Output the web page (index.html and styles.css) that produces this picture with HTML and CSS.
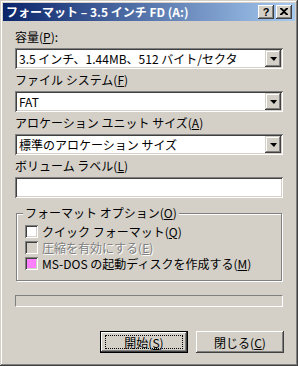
FILE: index.html
```html
<html>
    <head>
        <title>フォーマット</title>
        <link rel="stylesheet" href="styles.css">
    </head>
    <body>
        <div class="window">
            <div class="titlebar">
                <span class="title">フォーマット – 3.5 インチ FD (A:)</span>
                <div class="tbtns">
                    <span class="tbtn">?</span>
                    <span class="tbtn close">
                        <svg width="8" height="7" viewBox="0 0 8 7"><path d="M0 0h2l2 2 2-2h2v1L5 3.5 8 6v1H6L4 5 2 7H0V6l3-2.5L0 1z" fill="#000"/></svg>
                    </span>
                </div>
            </div>
            <div class="content">
                <div class="label">容量(<u>P</u>):</div>
                <div class="combo"><span class="value">3.5 インチ、1.44MB、512 バイト/セクタ</span><span class="arrow"></span></div>

                <div class="label">ファイル システム(<u>F</u>)</div>
                <div class="combo"><span class="value">FAT</span><span class="arrow"></span></div>

                <div class="label">アロケーション ユニット サイズ(<u>A</u>)</div>
                <div class="combo"><span class="value">標準のアロケーション サイズ</span><span class="arrow"></span></div>

                <div class="label">ボリューム ラベル(<u>L</u>)</div>
                <div class="textbox"></div>

                <fieldset class="group">
                    <legend>フォーマット オプション(<u>O</u>)</legend>
                    <div class="check"><span class="box"></span><span>クイック フォーマット(<u>Q</u>)</span></div>
                    <div class="check disabled"><span class="box"></span><span>圧縮を有効にする(<u>E</u>)</span></div>
                    <div class="check"><span class="box pink"></span><span>MS-DOS の起動ディスクを作成する(<u>M</u>)</span></div>
                </fieldset>

                <div class="progress"></div>

                <div class="buttons">
                    <div class="btn default"><span class="focus">開始(<u>S</u>)</span></div>
                    <div class="btn">閉じる(<u>C</u>)</div>
                </div>
            </div>
        </div>
    </body>
</html>
```

FILE: styles.css
```css
html, body{
	margin:0;
	padding:0;
	background:#d4d0c8;
	}
.window{
	width:298px;
	height:366px;
	box-sizing:border-box;
	padding:3px;
	background:#d4d0c8;
	box-shadow:inset -1px -1px #404040, inset 1px 1px #d4d0c8, inset -2px -2px #808080, inset 2px 2px #fff;
	font-family:'Noto Sans CJK JP', sans-serif;
	font-size:12px;
	color:#000;
	}
.titlebar{
	height:18px;
	display:flex;
	align-items:center;
	justify-content:space-between;
	background:linear-gradient(to right, #0a246a, #a6caf0);
	padding:0 3px 0 3px;
	}
.title{
	color:#fff;
	font-weight:bold;
	font-size:12px;
	line-height:18px;
	white-space:nowrap;
	}
.tbtns{
	display:flex;
	gap:2px;
	}
.tbtn{
	width:16px;
	height:14px;
	box-sizing:border-box;
	display:flex;
	align-items:center;
	justify-content:center;
	background:#d4d0c8;
	box-shadow:inset -1px -1px #404040, inset 1px 1px #fff, inset -2px -2px #808080;
	font-family:'Liberation Sans', sans-serif;
	font-weight:bold;
	font-size:11px;
	line-height:14px;
	padding-bottom:1px;
	}
.content{
	padding:8px 12px 0 12px;
	display:flex;
	flex-direction:column;
	}
.label{
	height:16px;
	line-height:16px;
	margin-bottom:3px;
	white-space:nowrap;
	}
.combo, .textbox{
	height:21px;
	box-sizing:border-box;
	background:#fff;
	box-shadow:inset 1px 1px #808080, inset -1px -1px #fff, inset 2px 2px #404040, inset -2px -2px #d4d0c8;
	display:flex;
	align-items:center;
	padding:2px;
	margin-bottom:3px;
	}
.value{
	flex:1;
	padding-left:2px;
	line-height:17px;
	white-space:nowrap;
	}
.arrow{
	width:16px;
	height:17px;
	box-sizing:border-box;
	background:#d4d0c8;
	box-shadow:inset -1px -1px #404040, inset 1px 1px #d4d0c8, inset -2px -2px #808080, inset 2px 2px #fff;
	display:flex;
	align-items:center;
	justify-content:center;
	}
.arrow::after{
	content:"";
	border-left:4px solid transparent;
	border-right:3px solid transparent;
	border-top:4px solid #000;
	margin-top:1px;
	}
.group{
	margin:5px 1px 0 1px;
	padding:3px 0 9px 8px;
	border:1px solid #808080;
	box-shadow:1px 1px 0 #fff, inset 1px 1px 0 #fff;
	}
.group legend{
	padding:0 2px;
	margin-left:-2px;
	background:#d4d0c8;
	line-height:14px;
	}
.check{
	height:16px;
	display:flex;
	align-items:center;
	gap:4px;
	white-space:nowrap;
	}
.box{
	width:13px;
	height:13px;
	box-sizing:border-box;
	background:#fff;
	box-shadow:inset 1px 1px #808080, inset -1px -1px #fff, inset 2px 2px #404040, inset -2px -2px #d4d0c8;
	}
.box.pink{
	background:#ff80ff;
	}
.disabled{
	color:#808080;
	text-shadow:1px 1px 0 #fff;
	}
.disabled .box{
	background:#d4d0c8;
	}
.progress{
	margin-top:14px;
	height:12px;
	box-sizing:border-box;
	border-top:1px solid #808080;
	border-left:1px solid #808080;
	border-bottom:1px solid #fff;
	border-right:1px solid #fff;
	}
.buttons{
	margin-top:24px;
	display:flex;
	justify-content:flex-end;
	gap:8px;
	margin-right:-1px;
	}
.btn{
	width:88px;
	height:22px;
	box-sizing:border-box;
	display:flex;
	align-items:center;
	justify-content:center;
	background:#d4d0c8;
	box-shadow:inset -1px -1px #404040, inset 1px 1px #fff, inset -2px -2px #808080, inset 2px 2px #d4d0c8;
	}
.btn.default{
	border:1px solid #000;
	}
.focus{
	width:78px;
	height:14px;
	box-sizing:border-box;
	border:1px dotted #000;
	display:flex;
	align-items:center;
	justify-content:center;
	}
```
